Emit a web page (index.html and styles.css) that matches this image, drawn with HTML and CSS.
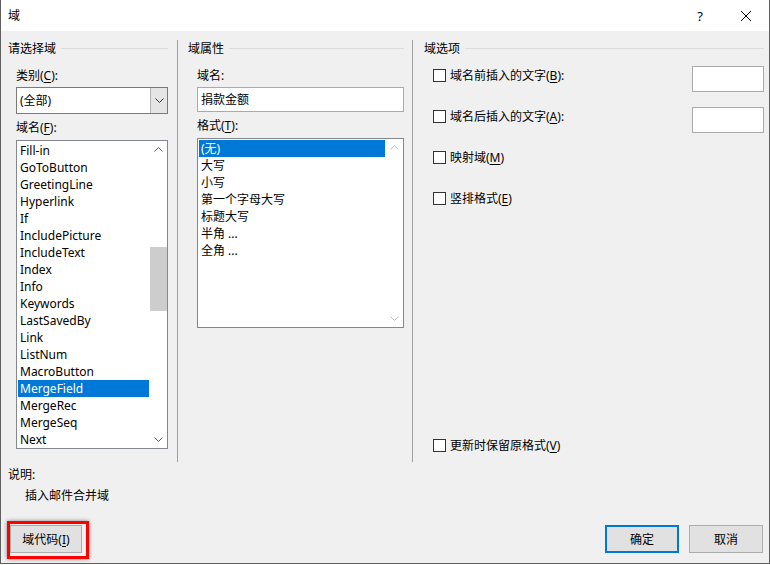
FILE: index.html
```html
<!DOCTYPE html>
<html lang="zh-CN">
<head>
    <meta charset="UTF-8">
    <title>域</title>
    <link rel="stylesheet" href="styles.css">
</head>
<body>
<div class="dialog">
    <div class="titlebar">
        <span class="title">域</span>
        <span class="tb-btn help">?</span>
        <span class="tb-btn">
            <svg width="12" height="12" viewBox="0 0 12 12"><path d="M1 1 L11 11 M11 1 L1 11" stroke="#000" stroke-width="1" fill="none"/></svg>
        </span>
    </div>

    <div class="main">
        <div class="col col-left">
            <div class="group-title">请选择域</div>
            <div class="inner">
                <div class="label label-first">类别(<u>C</u>):</div>
                <div class="combo">
                    <span class="combo-text">(全部)</span>
                    <span class="combo-btn">
                        <svg width="9" height="5" viewBox="0 0 9 5"><path d="M0.5 0.5 L4.5 4.5 L8.5 0.5" stroke="#333" fill="none"/></svg>
                    </span>
                </div>
                <div class="label">域名(<u>F</u>):</div>
                <div class="listbox listbox-names">
                    <ul class="items">
                        <li>Fill-in</li>
                        <li>GoToButton</li>
                        <li>GreetingLine</li>
                        <li>Hyperlink</li>
                        <li>If</li>
                        <li>IncludePicture</li>
                        <li>IncludeText</li>
                        <li>Index</li>
                        <li>Info</li>
                        <li>Keywords</li>
                        <li>LastSavedBy</li>
                        <li>Link</li>
                        <li>ListNum</li>
                        <li>MacroButton</li>
                        <li class="selected">MergeField</li>
                        <li>MergeRec</li>
                        <li>MergeSeq</li>
                        <li>Next</li>
                    </ul>
                    <div class="scrollbar">
                        <span class="arrow"><svg width="9" height="5" viewBox="0 0 9 5"><path d="M0.5 4.5 L4.5 0.5 L8.5 4.5" stroke="#606060" fill="none"/></svg></span>
                        <span class="thumb"></span>
                        <span class="track"></span>
                        <span class="arrow"><svg width="9" height="5" viewBox="0 0 9 5"><path d="M0.5 0.5 L4.5 4.5 L8.5 0.5" stroke="#606060" fill="none"/></svg></span>
                    </div>
                </div>
            </div>
        </div>

        <div class="col col-mid">
            <div class="group-title">域属性</div>
            <div class="inner">
                <div class="label label-first">域名:</div>
                <div class="textbox">捐款金额</div>
                <div class="label">格式(<u>T</u>):</div>
                <div class="listbox listbox-format">
                    <ul class="items">
                        <li class="selected">(无)</li>
                        <li>大写</li>
                        <li>小写</li>
                        <li>第一个字母大写</li>
                        <li>标题大写</li>
                        <li>半角 ...</li>
                        <li>全角 ...</li>
                    </ul>
                    <div class="scrollbar">
                        <span class="arrow"><svg width="9" height="5" viewBox="0 0 9 5"><path d="M0.5 4.5 L4.5 0.5 L8.5 4.5" stroke="#c0c0c0" fill="none"/></svg></span>
                        <span class="track"></span>
                        <span class="arrow"><svg width="9" height="5" viewBox="0 0 9 5"><path d="M0.5 0.5 L4.5 4.5 L8.5 0.5" stroke="#c0c0c0" fill="none"/></svg></span>
                    </div>
                </div>
            </div>
        </div>

        <div class="col col-right">
            <div class="group-title">域选项</div>
            <div class="inner options">
                <div class="option-row">
                    <span class="check"><span class="box"></span><span>域名前插入的文字(<u>B</u>):</span></span>
                    <span class="small-input"></span>
                </div>
                <div class="option-row">
                    <span class="check"><span class="box"></span><span>域名后插入的文字(<u>A</u>):</span></span>
                    <span class="small-input"></span>
                </div>
                <div class="option-row">
                    <span class="check"><span class="box"></span><span>映射域(<u>M</u>)</span></span>
                </div>
                <div class="option-row">
                    <span class="check"><span class="box"></span><span>竖排格式(<u>E</u>)</span></span>
                </div>
                <div class="option-last">
                    <span class="check"><span class="box"></span><span>更新时保留原格式(<u>V</u>)</span></span>
                </div>
            </div>
        </div>
    </div>

    <div class="desc-label">说明:</div>
    <div class="desc-text">插入邮件合并域</div>

    <div class="footer">
        <button class="btn btn-code">域代码(<u>I</u>)</button>
        <div class="footer-right">
            <button class="btn btn-default">确定</button>
            <button class="btn">取消</button>
        </div>
    </div>
</div>
</body>
</html>
```

FILE: styles.css
```css
body {
    margin: 0;
    background: #fff;
    font-family: "Segoe UI", "Noto Sans", "Noto Sans CJK SC", sans-serif;
    font-size: 12px;
    color: #000;
}
u { text-decoration-thickness: 1px; text-underline-offset: 2px; }

.dialog {
    width: 770px;
    height: 564px;
    box-sizing: border-box;
    border: 1px solid #5f5f5f;
    border-top: none;
    background: #f0f0f0;
    display: flex;
    flex-direction: column;
}

.titlebar {
    height: 31px;
    background: #fff;
    display: flex;
    align-items: center;
    flex-shrink: 0;
}
.title { flex: 1; padding-left: 7px; line-height: 17px; margin-top: -1px; }
.tb-btn {
    width: 46px;
    height: 31px;
    display: flex;
    align-items: center;
    justify-content: center;
}
.help { font-size: 13px; }

.main {
    display: flex;
    margin-top: 9px;
    height: 422px;
    flex-shrink: 0;
}
.col {
    box-sizing: border-box;
    display: flex;
    flex-direction: column;
}
.col-left { width: 177px; border-right: 1px solid #a0a0a0; padding: 0 9px 0 7px; }
.col-mid { width: 235px; border-right: 1px solid #a0a0a0; padding: 0 8px 0 10px; }
.col-right { flex: 1; padding: 0 5px 0 11px; }
.col-left .inner { padding-left: 8px; }
.col-mid .inner { padding-left: 9px; }
.col-right .inner { padding-left: 9px; }

.group-title {
    display: flex;
    align-items: center;
    line-height: 17px;
    height: 17px;
}
.group-title::after {
    content: "";
    flex: 1;
    height: 1px;
    background: #dcdcdc;
    margin-left: 5px;
}

.label { line-height: 17px; margin-top: 5px; }
.label-first { margin-top: 10px; }

.combo {
    margin-top: 3px;
    height: 27px;
    box-sizing: border-box;
    border: 1px solid #7a7a7a;
    background: #fff;
    display: flex;
}
.combo-text { flex: 1; padding-left: 3px; line-height: 25px; }
.combo-btn {
    width: 16px;
    border-left: 1px solid #b4b4b4;
    background: #e5e5e5;
    display: flex;
    align-items: center;
    justify-content: center;
}

.textbox {
    margin-top: 3px;
    height: 25px;
    box-sizing: border-box;
    border: 1px solid #aaaaaa;
    background: #fff;
    padding-left: 3px;
    line-height: 23px;
}

.listbox {
    margin-top: 4px;
    box-sizing: border-box;
    border: 1px solid #828790;
    background: #fff;
    display: flex;
    padding: 1px 0 0 1px;
}
.listbox-names { height: 309px; }
.listbox-format { height: 190px; }
.items {
    list-style: none;
    margin: 0 1px 0 0;
    padding: 0;
    flex: 1;
    overflow: hidden;
}
.items li {
    line-height: 17px;
    height: 17px;
    padding-left: 2px;
    white-space: nowrap;
}
.items li.selected { background: #0078d7; color: #fff; }

.scrollbar {
    width: 17px;
    display: flex;
    flex-direction: column;
    margin-top: -1px;
}
.scrollbar .arrow {
    height: 17px;
    display: flex;
    align-items: center;
    justify-content: center;
}
.scrollbar .thumb {
    height: 64px;
    margin-top: 89px;
    background: #cdcdcd;
}
.scrollbar .track { flex: 1; }

.options { flex: 1; display: flex; flex-direction: column; }
.option-row {
    height: 41px;
    display: flex;
    align-items: flex-start;
}
.option-row:first-child { margin-top: 9px; }
.check {
    flex: 1;
    display: flex;
    align-items: center;
    gap: 4px;
    line-height: 17px;
    margin-top: 1px;
}
.box {
    width: 13px;
    height: 13px;
    box-sizing: border-box;
    border: 1px solid #333;
    background: #fff;
}
.small-input {
    width: 72px;
    height: 26px;
    box-sizing: border-box;
    border: 1px solid #ababab;
    background: #fff;
}
.option-last { margin-top: auto; margin-bottom: 8px; display: flex; }

.desc-label { margin-top: 4px; padding-left: 7px; line-height: 17px; }
.desc-text { margin-top: 4px; padding-left: 24px; line-height: 17px; }

.footer {
    margin-top: auto;
    padding: 0 6px 10px 9px;
    display: flex;
    justify-content: space-between;
    align-items: flex-end;
}
.footer-right { display: flex; gap: 10px; }
.btn {
    width: 74px;
    height: 28px;
    box-sizing: border-box;
    border: 1px solid #adadad;
    background: #e1e1e1;
    font-family: inherit;
    font-size: 12px;
    color: #000;
    padding: 0;
}
.btn-default { border: 2px solid #0078d7; }
.btn-code { width: 72px; position: relative; }
.btn-code::after {
    content: "";
    position: absolute;
    left: -4px;
    top: -5px;
    width: 82px;
    height: 38px;
    box-sizing: border-box;
    border: 3px solid #f00;
    box-shadow: 0 0 4px rgba(0, 0, 0, 0.45);
}
```
